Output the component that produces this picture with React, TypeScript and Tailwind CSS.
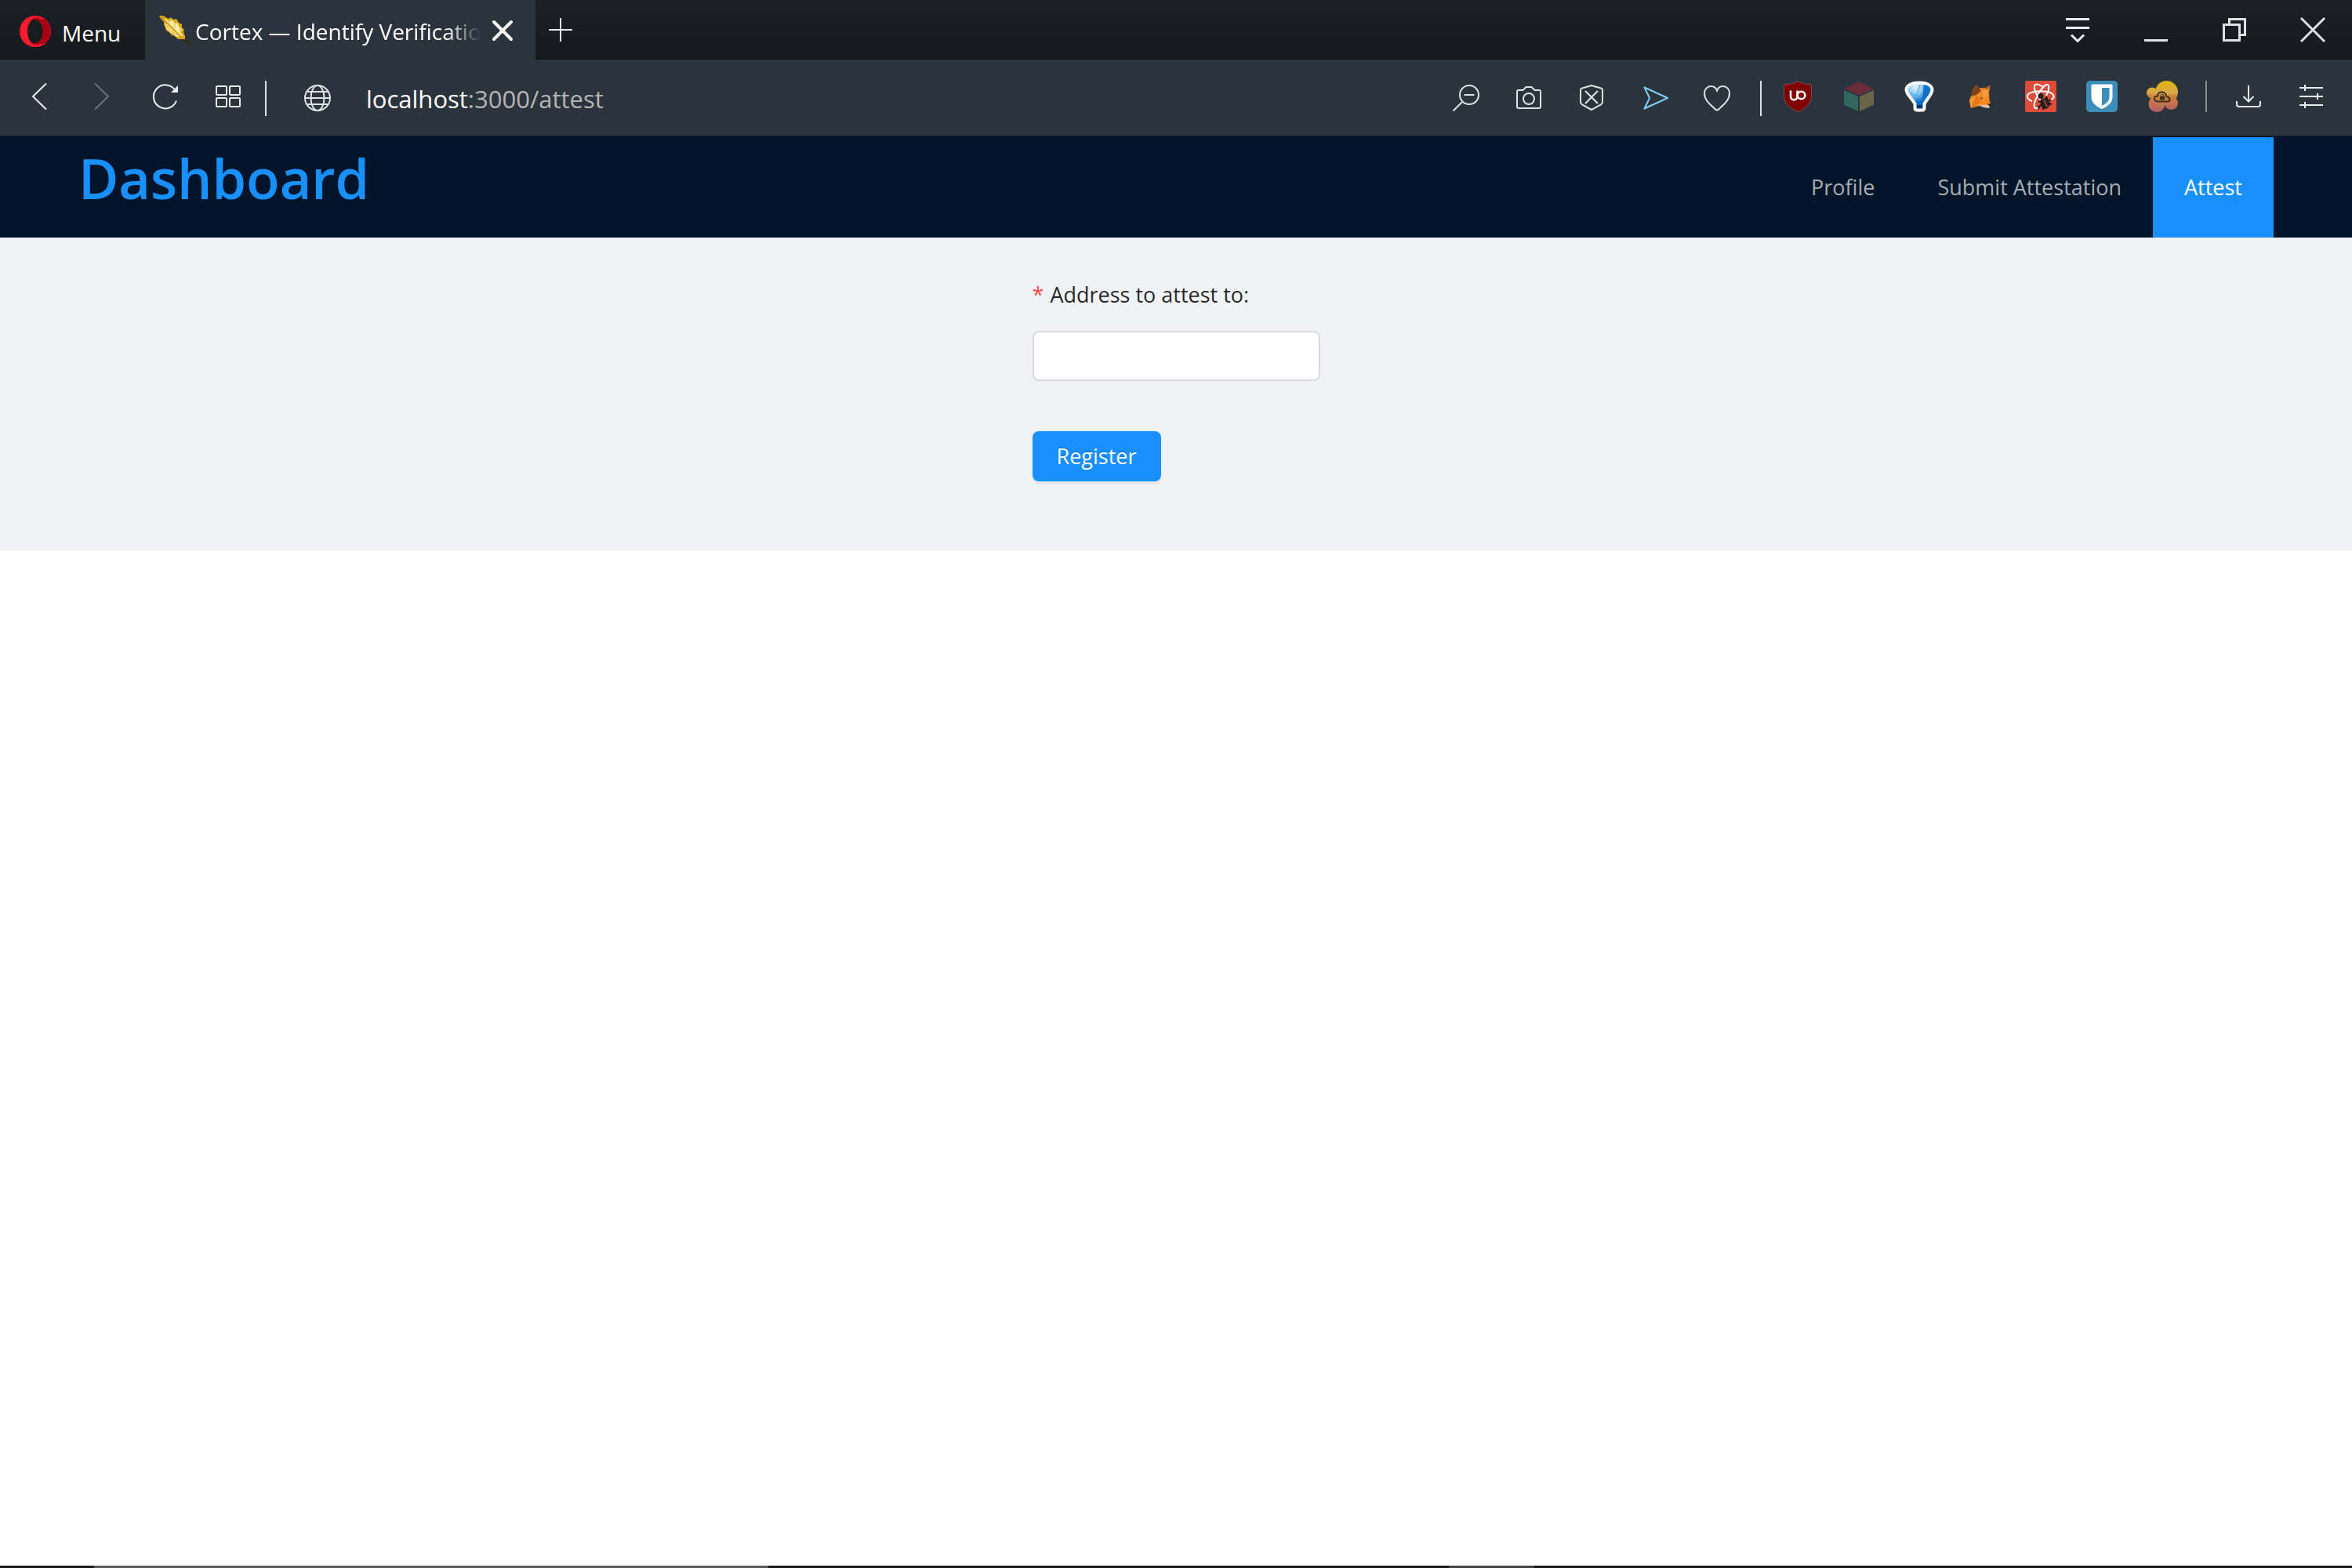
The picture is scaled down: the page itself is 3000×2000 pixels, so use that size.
import React from 'react';

interface IconProps {
  children: React.ReactNode;
  className?: string;
}

interface ToolItem {
  id: string;
  label: string;
  icon: React.ReactNode;
}

interface NavItem {
  label: string;
  href: string;
  active?: boolean;
}

// Line icons share a 40x40 box and a 2px stroke
const Icon: React.FC<IconProps> = ({ children, className = 'text-[#dce1e4]' }) => (
  <svg
    viewBox="0 0 40 40"
    className={`h-10 w-10 shrink-0 ${className}`}
    fill="none"
    stroke="currentColor"
    strokeWidth="2"
    aria-hidden="true"
  >
    {children}
  </svg>
);

const navigation: ToolItem[] = [
  {
    id: 'back',
    label: 'Back',
    icon: (
      <Icon className="text-[#e8ebed]">
        <path d="M29 3.5 12 20l17 16.5" />
      </Icon>
    ),
  },
  {
    id: 'forward',
    label: 'Forward',
    icon: (
      <Icon className="text-[#69727a]">
        <path d="M11 3.5 28 20 11 36.5" />
      </Icon>
    ),
  },
  {
    id: 'reload',
    label: 'Reload',
    icon: (
      <Icon className="text-[#e8ebed]">
        <path d="M35 25.5A15 15 0 1 1 33 11.5" />
        <path d="M37 6v9h-9z" fill="currentColor" stroke="none" />
      </Icon>
    ),
  },
  {
    id: 'speed-dial',
    label: 'Speed Dial',
    icon: (
      <Icon className="text-[#e8ebed]">
        <rect x="6" y="7" width="13" height="11" rx="1" />
        <rect x="23" y="7" width="13" height="11" rx="1" />
        <rect x="6" y="22" width="13" height="11" rx="1" />
        <rect x="23" y="22" width="13" height="11" rx="1" />
      </Icon>
    ),
  },
];

const pageTools: ToolItem[] = [
  {
    id: 'zoom',
    label: 'Zoom out',
    icon: (
      <Icon>
        <circle cx="24" cy="18" r="12" />
        <path d="M17.5 18h13M15 27 3.5 38.5" />
      </Icon>
    ),
  },
  {
    id: 'snapshot',
    label: 'Snapshot',
    icon: (
      <Icon>
        <path d="M7 12h5.5l4-4h7l4 4H33a2 2 0 0 1 2 2v19a2 2 0 0 1-2 2H7a2 2 0 0 1-2-2V14a2 2 0 0 1 2-2z" />
        <circle cx="20" cy="23" r="7" />
      </Icon>
    ),
  },
  {
    id: 'blocker',
    label: 'Ad blocker',
    icon: (
      <Icon>
        <path d="M20 6 32 9.5a2.5 2.5 0 0 1 2 2.5v15q0 2-2 3.5L20 37 8 30.5Q6 29 6 27V12a2.5 2.5 0 0 1 2-2.5z" />
        <path d="m12 13 16 16M28 13 12 29" />
      </Icon>
    ),
  },
  {
    id: 'flow',
    label: 'My Flow',
    icon: (
      <Icon className="text-[#7ecbf5]">
        <path d="M7.5 8.5 37 22 7.5 35.5 14 22z" strokeLinejoin="round" />
      </Icon>
    ),
  },
  {
    id: 'bookmark',
    label: 'Bookmark',
    icon: (
      <Icon>
        <path d="M20 12.5C18.5 8.5 16 7 12.5 7 7.5 7 4 11 4 16c0 9 7 14 14 20.500q2 1.800 4 0C29 30 36 25 36 16c0-5-3.500-9-8.500-9-3.500 0-6 1.500-7.500 5.500z" />
      </Icon>
    ),
  },
];

const extensions: ToolItem[] = [
  {
    id: 'ublock',
    label: 'uBlock Origin',
    icon: (
      <Icon>
        <path d="M20 .5Q24 4 37.5 5v15.5Q37.5 32 20 39.5 2.5 32 2.5 20.5V5Q16 4 20 .5z" fill="#800000" stroke="#7d4a50" strokeWidth="1" />
        <path d="M11 12.5v7.5a4 4 0 0 0 8.5 0v-7.5" stroke="#fff" strokeWidth="2.6" />
        <circle cx="24.5" cy="18.5" r="4.8" stroke="#fff" strokeWidth="2.6" />
      </Icon>
    ),
  },
  {
    id: 'cube',
    label: 'Cube',
    icon: (
      <Icon>
        <g stroke="none">
          <path d="M20 1 38.5 10 20 18.5 1.5 10z" fill="#672b3a" />
          <path d="M1 12l18 8v19L1 30.5z" fill="#32675f" />
          <path d="M39 12l-18 8v19l18-8.5z" fill="#6b6548" />
        </g>
      </Icon>
    ),
  },
  {
    id: 'balloon',
    label: 'Balloon',
    icon: (
      <Icon>
        <defs>
          <radialGradient id="balloon" cx=".35" cy=".15" r=".9">
            <stop offset="0" stopColor="#e4f4ff" />
            <stop offset=".3" stopColor="#8fcbf5" />
            <stop offset=".6" stopColor="#0a78d0" />
            <stop offset="1" stopColor="#043a72" />
          </radialGradient>
        </defs>
        <path d="M20 2.5c9 0 16.5 3 16.5 9 0 6-7 12-10 18v5q0 3-3 3h-6q-3 0-3-3v-5c-3-6-11-12-11-18 0-6 7.5-9 16.5-9z" fill="url(#balloon)" stroke="#fff" strokeWidth="4" />
        <path d="M26 5c5 1 8 3 7 7-2 5-7 10-10 18z" fill="#1470c4" stroke="none" />
        <path d="M17 31.5h6v3h-6z" fill="#062f5a" stroke="none" />
        <path d="m8 15 8 4 5-13" stroke="#4aa4e6" strokeWidth="1" />
      </Icon>
    ),
  },
  {
    id: 'metamask',
    label: 'MetaMask',
    icon: (
      <Icon>
        <g stroke="none">
          <path d="M10 15 18 9l7 .5L32.5 6l-1.5 9 .5 10 1.5 5-5 3-10-1-10 3-2-10 2-5z" fill="#f08a24" />
          <path d="M14.5 5l4 4 2.5 4-6 5-6 2V12z" fill="#80451c" />
          <path d="M32.5 6l-2.5 5-5-1.5z" fill="#a3561f" />
          <path d="M6 25l6-5 3 7-7 8z" fill="#f9992f" />
          <path d="m15 18 5 8-6 6-6 3 3-9z" fill="#e57619" />
          <path d="M21 13l9-2-1 9-4 2z" fill="#f59a3c" />
          <path d="M17 31l10-.5 5 1.5-1 3-7-1z" fill="#d8c4b2" />
          <path d="M28.5 29.5h4.5v3z" fill="#171717" />
          <path d="m19 21 4 1-2 2z" fill="#5c4d40" />
        </g>
      </Icon>
    ),
  },
  {
    id: 'react',
    label: 'React Developer Tools',
    icon: (
      <Icon>
        <rect width="40" height="40" rx="2" fill="#dd4b39" stroke="none" />
        <g stroke="#fff" strokeWidth="2">
          <path d="M9 26C1 23 1 17 8 15c7-2.5 17-2.5 24 0 6 3 6 7 1 9" />
          <path d="M17 34c-6 4-7-3-3-11C18 14 23 7 27 5c5-1 4 7 0 14" />
          <path d="M24 9C20 5 14 3 12 6c-1 5 3 13 8 19" />
        </g>
        <g stroke="#231f20" strokeWidth="2">
          <circle cx="20" cy="19.5" r="2.5" fill="#231f20" />
          <path d="M20 24.5 28 21.5l4 8.5-4 5-5 .5-3-5z" fill="#231f20" strokeWidth="1" />
          <path d="M20 26l-3 1M21 31l-4 2 1 3M23 34v3M28 22l-1-2M30 26l3-2M31 29l3 1" />
        </g>
        <path d="M24 24l4 9" stroke="#dd4b39" strokeWidth="1.5" />
      </Icon>
    ),
  },
  {
    id: 'bitwarden',
    label: 'Bitwarden',
    icon: (
      <Icon>
        <rect width="40" height="40" rx="5" fill="#3c8dbc" stroke="none" />
        <path d="M8 4.5h24a1.5 1.5 0 0 1 1.5 1.5v15c0 7-6 11.5-13.5 15C12.5 32.5 6.5 28 6.5 21V6A1.5 1.5 0 0 1 8 4.5z" fill="#fff" stroke="none" />
        <path d="M20 9h9.5v12c0 5-4 8-9.5 11z" fill="#3c8dbc" stroke="none" />
      </Icon>
    ),
  },
  {
    id: 'cloud',
    label: 'Cloud',
    icon: (
      <Icon>
        <defs>
          <linearGradient id="cloud" x1="0" y1="0" x2="0" y2="40" gradientUnits="userSpaceOnUse">
            <stop offset="0" stopColor="#dfb800" />
            <stop offset=".4" stopColor="#dba552" />
            <stop offset=".48" stopColor="#cf8436" />
            <stop offset="1" stopColor="#b55d69" />
          </linearGradient>
        </defs>
        <g fill="url(#cloud)" stroke="none">
          <circle cx="25.5" cy="14.5" r="14.5" />
          <circle cx="7" cy="15.5" r="7" />
          <circle cx="13" cy="29.5" r="10.5" />
          <circle cx="31.5" cy="28.5" r="8.5" />
          <rect x="5" y="12" width="28" height="19" />
        </g>
        <path d="M14 26.5h13q3 0 2.5-3-.5-3-4-3-1-6-6-6t-5.5 5q-4 0-4 3.5 0 3 4 3.5z" stroke="#3a3322" />
        <path d="M17 20h6v4.5h-6z" fill="#3a3322" stroke="none" />
        <path d="M18.5 20v-2q1.5-2 3 0v2" stroke="#3a3322" strokeWidth="1" />
      </Icon>
    ),
  },
];

const panelTools: ToolItem[] = [
  {
    id: 'downloads',
    label: 'Downloads',
    icon: (
      <Icon className="text-[#e8ebed]">
        <path d="M20 6v20M13.5 20l6.5 6.5 6.5-6.5M5 26v4q0 3 3 3h24q3 0 3-3v-4" />
      </Icon>
    ),
  },
  {
    id: 'easy-setup',
    label: 'Easy setup',
    icon: (
      <Icon className="text-[#e8ebed]">
        <path d="M5 9h30M5 20h30M5 31h30M12 5v8M28 16v8M12 27v8" />
      </Icon>
    ),
  },
];

const windowControls: ToolItem[] = [
  {
    id: 'tab-menu',
    label: 'Tab menu',
    icon: (
      <Icon className="text-[#e8ebed]">
        <path d="M5 6.5h30M5 17.5h30M12 26.5l8 8 8-8" strokeWidth="3" />
      </Icon>
    ),
  },
  {
    id: 'minimize',
    label: 'Minimize',
    icon: (
      <Icon>
        <path d="M5 33.5h30" strokeWidth="3" />
      </Icon>
    ),
  },
  {
    id: 'restore',
    label: 'Restore',
    icon: (
      <Icon>
        <path d="M6.5 13.5h20v20h-20zM13.5 13V6.5h20v20H27" strokeWidth="3" />
      </Icon>
    ),
  },
  {
    id: 'close',
    label: 'Close',
    icon: (
      <Icon>
        <path d="M5 5l30 30M35 5 5 35" strokeWidth="3" />
      </Icon>
    ),
  },
];

const navItems: NavItem[] = [
  { label: 'Profile', href: '#profile' },
  { label: 'Submit Attestation', href: '#submit' },
  { label: 'Attest', href: '#attest', active: true },
];

const ToolButton: React.FC<{ item: ToolItem }> = ({ item }) => (
  <button type="button" aria-label={item.label} className="shrink-0">
    {item.icon}
  </button>
);

const TabStrip: React.FC = () => (
  <div className="flex h-[76px] items-stretch bg-linear-to-b from-[#1c2024] to-[#15181c] text-white">
    <button type="button" className="flex w-[185px] shrink-0 items-start gap-[14px] border-b border-[#111417] pt-5 pl-[25px] text-[28px]">
      <svg viewBox="0 0 40 40" className="h-10 w-10 shrink-0" aria-hidden="true">
        <path fillRule="evenodd" d="M20 0a20 20 0 1 0 0 40 20 20 0 0 0 0-40zM20 4C26 4 30 11 30 20s-4 16-10 16-10-7-10-16S14 4 20 4z" fill="#ff1b2d" />
        <path d="M13.5 6.5C17 2.5 22 2 26.5 4a17 17 0 0 1 6.5 1 20 20 0 0 1 0 30 17 17 0 0 1-6.5 1c-4.5 2-9.5 1.5-13-2.5 6 4 16 0 16-13.5S19.5 2.5 13.5 6.5z" fill="#a70014" />
      </svg>
      <span className="leading-[44px]">Menu</span>
    </button>
    <div className="flex w-[498px] shrink-0 items-start bg-[#2b343d] pl-[18px]">
      <svg viewBox="0 0 40 40" className="mt-5 h-10 w-10 shrink-0" aria-hidden="true">
        <path d="M0 0h5l7 4 3-2 3 3 4-1 3 5 4 2v4l3 3-1 3 2 5v4h-9l-4-4-4-1-3-4-4-2-1-4-2-3V8L2 4z" fill="#d9a514" />
        <path d="M6 3l7 4 4-2 2 4 5 1 1 4 4 3-1 4 2 6-5-1-6-6-7-7z" fill="#fdeba6" />
        <path d="M8 9l7 6 8 8 3 4h-5l-3-4-4-1-3-4-3-2z" fill="#f7d975" />
        <path d="M2 2l8 7 10 10 9 9" stroke="#c08a08" strokeWidth="1.5" fill="none" />
        <path d="M12 4v7M20 7v9M27 13v9M8 14h7M15 21h8" stroke="#e2b63c" strokeWidth="1" fill="none" />
        <path d="M33 31h5v4h-5zM37 35h3v3h-3z" fill="#332b0c" />
      </svg>
      <span className="ml-[6px] w-[364px] overflow-hidden mask-r-from-88% text-[28px] leading-[80px] whitespace-nowrap">
        Cortex — Identify Verification
      </span>
      <button type="button" aria-label="Close tab" className="mt-[18px] ml-2">
        <Icon className="text-white">
          <path d="M9 10l22 22M31 10 9 32" strokeWidth="4" strokeLinecap="round" />
        </Icon>
      </button>
    </div>
    <div className="flex grow items-start justify-between border-b border-[#111417] pt-[18px] pl-3">
      <button type="button" aria-label="New tab">
        <Icon className="text-[#e8ebed]">
          <path d="M5 20h30M20 5v30" />
        </Icon>
      </button>
      <div className="flex">
        {windowControls.map((item) => (
          <button key={item.id} type="button" aria-label={item.label} className="flex w-[100px] justify-center">
            {item.icon}
          </button>
        ))}
      </div>
    </div>
  </div>
);

const AddressBar: React.FC = () => (
  <div className="flex h-[98px] items-start justify-between border-b border-[#14191d] bg-[#2b343d] pt-[27px] pr-8 pl-[30px]">
    <div className="flex items-start">
      <div className="flex gap-10">
        {navigation.map((item) => (
          <ToolButton key={item.id} item={item} />
        ))}
      </div>
      <div className="ml-7 h-[45px] w-0.5 bg-[#dce1e4]" />
      <div className="ml-[45px] pt-0.5">
        <Icon>
          <circle cx="20" cy="20" r="16" />
          <ellipse cx="20" cy="20" rx="8.5" ry="16" />
          <path d="M4 20h32M6.5 12h27M6.5 28h27" />
        </Icon>
      </div>
      <p className="ml-[42px] text-[31px] leading-[46px] text-[#b4b4b4]">
        <span className="text-white">localhost</span>:3000/attest
      </p>
    </div>
    <div className="flex items-start">
      <div className="flex gap-10">
        {pageTools.map((item) => (
          <ToolButton key={item.id} item={item} />
        ))}
      </div>
      <div className="ml-[35px] h-[45px] w-0.5 bg-[#dce1e4]" />
      <div className="ml-[26px] flex w-[505px] justify-between">
        {extensions.map((item) => (
          <ToolButton key={item.id} item={item} />
        ))}
      </div>
      <div className="ml-[35px] h-10 w-0.5 bg-[#8b8f92]" />
      <div className="ml-[33px] flex gap-10">
        {panelTools.map((item) => (
          <ToolButton key={item.id} item={item} />
        ))}
      </div>
    </div>
  </div>
);

const Header: React.FC = () => (
  <header className="flex items-start justify-between border-t border-[#001529] bg-[#001529] px-[100px]">
    <h1 className="text-[70px] leading-[104px] font-semibold text-[#1890ff]">Dashboard</h1>
    <nav className="flex text-[27px] leading-[128px]">
      {navItems.map((item) => (
        <a
          key={item.label}
          href={item.href}
          className={`px-10 ${item.active ? 'bg-[#1890ff] text-white' : 'text-[#a6adb4]'}`}
        >
          {item.label}
        </a>
      ))}
    </nav>
  </header>
);

const AttestForm: React.FC = () => (
  <section className="flex justify-center bg-[#f0f2f5] pt-[43px] pb-[88px]">
    <form className="flex w-[367px] flex-col items-start" onSubmit={(e) => e.preventDefault()}>
      <label htmlFor="address" className="flex text-[27px] leading-[60px] text-black/85">
        <span className="mr-2 text-[#ff4d4f]">*</span>
        <span>Address to attest to</span>
        <span>:</span>
      </label>
      <input
        id="address"
        type="text"
        className="mt-4 h-16 w-full rounded-lg border-2 border-[#d9d9d9] bg-white px-[22px] text-[27px] outline-none"
      />
      <button
        type="submit"
        className="mt-16 h-16 rounded-lg bg-[#1890ff] px-[31px] text-[27px] text-white shadow-[0_4px_0_rgba(0,0,0,0.045)] text-shadow-[0_-2px_0_rgba(0,0,0,0.12)]"
      >
        Register
      </button>
    </form>
  </section>
);

const App: React.FC = () => {
  return (
    <div className="flex min-h-screen flex-col bg-white font-['Open_Sans',sans-serif]">
      <TabStrip />
      <AddressBar />
      <main className="grow">
        <Header />
        <AttestForm />
      </main>
      {/* Top edge of the task bar */}
      <footer className="flex h-[3px] bg-[#1b1a1d]">
        <div className="ml-[4%] w-[860px] bg-[#5a5a5a]" />
        <div className="ml-[868px] w-[109px] bg-[#434343]" />
      </footer>
    </div>
  );
};

export default App;
